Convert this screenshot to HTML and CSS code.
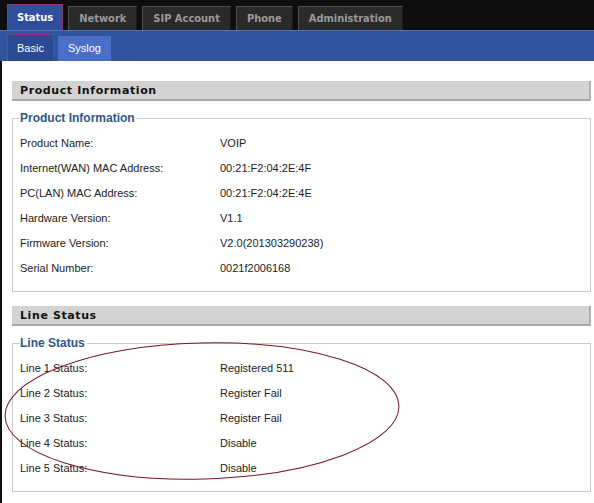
FILE: index.html
```html
<!DOCTYPE html>
<html>
<head>
<meta charset="utf-8">
<link rel="stylesheet" href="styles.css">
</head>
<body>
<div class="page">
  <div class="topbar">
    <div class="tab active">Status</div>
    <div class="tab">Network</div>
    <div class="tab">SIP Account</div>
    <div class="tab">Phone</div>
    <div class="tab">Administration</div>
  </div>
  <div class="subbar">
    <div class="subtab active">Basic</div>
    <div class="subtab">Syslog</div>
  </div>
  <div class="content">
    <div class="section-head">Product Information</div>
    <fieldset class="box">
      <legend>Product Information</legend>
      <div class="row"><span class="label">Product Name:</span><span class="value">VOIP</span></div>
      <div class="row"><span class="label">Internet(WAN) MAC Address:</span><span class="value">00:21:F2:04:2E:4F</span></div>
      <div class="row"><span class="label">PC(LAN) MAC Address:</span><span class="value">00:21:F2:04:2E:4E</span></div>
      <div class="row"><span class="label">Hardware Version:</span><span class="value">V1.1</span></div>
      <div class="row"><span class="label">Firmware Version:</span><span class="value">V2.0(201303290238)</span></div>
      <div class="row"><span class="label">Serial Number:</span><span class="value">0021f2006168</span></div>
    </fieldset>
    <div class="section-head">Line Status</div>
    <fieldset class="box">
      <legend>Line Status</legend>
      <div class="row"><span class="label">Line 1 Status:</span><span class="value">Registered 511</span></div>
      <div class="row"><span class="label">Line 2 Status:</span><span class="value">Register Fail</span></div>
      <div class="row"><span class="label">Line 3 Status:</span><span class="value">Register Fail</span></div>
      <div class="row"><span class="label">Line 4 Status:</span><span class="value">Disable</span></div>
      <div class="row"><span class="label">Line 5 Status:</span><span class="value">Disable</span></div>
    </fieldset>
  </div>
  <svg class="mark" width="594" height="503" viewBox="0 0 594 503">
    <ellipse cx="202" cy="411" rx="197" ry="68" transform="rotate(-1.5 202 411)" fill="none" stroke="#7a1626" stroke-width="1"/>
  </svg>
</div>
</body>
</html>
```
FILE: styles.css
```css
html, body {
  margin: 0;
  padding: 0;
  background: #0e0e0e;
}
.page {
  position: relative;
  width: 594px;
  height: 503px;
  overflow: hidden;
  background: #0e0e0e;
}
.topbar {
  display: flex;
  align-items: flex-end;
  gap: 5px;
  height: 30px;
  padding-left: 7px;
  box-sizing: border-box;
}
.tab {
  font-family: "DejaVu Sans Condensed", "DejaVu Sans", Tahoma, sans-serif;
  font-weight: bold;
  font-size: 11px;
  color: #9a9a9a;
  background: #2a2a2a;
  border-top: 1px solid #4e4e4e;
  border-left: 1px solid #4e4e4e;
  border-right: 1px solid #1a1a1a;
  height: 24px;
  line-height: 24px;
  padding: 0 10px;
  box-sizing: border-box;
}
.tab.active {
  background: #2f4f9c;
  color: #ffffff;
  border: 1px solid #8c3a70;
  border-bottom: none;
  height: 26px;
  line-height: 25px;
  padding: 0 9px;
}
.subbar {
  display: flex;
  align-items: flex-end;
  gap: 4px;
  height: 31px;
  padding-left: 7px;
  background: #32539e;
  border-top: 1px solid #5670b4;
  box-sizing: border-box;
}
.subtab {
  font-family: "Liberation Sans", Arial, sans-serif;
  font-size: 11px;
  color: #ffffff;
  background: #4b6fc6;
  height: 25px;
  line-height: 25px;
  padding: 0 10px;
  box-sizing: border-box;
}
.subtab.active {
  background: #2b4a93;
  border: 1px solid #9c3468;
  border-bottom: none;
  height: 27px;
  line-height: 26px;
  padding: 0 9px;
}
.content {
  background: #ffffff;
  margin-left: 2px;
  padding: 20px 3px 20px 10px;
  height: 442px;
  box-sizing: border-box;
}
.section-head {
  font-family: "DejaVu Sans", Verdana, sans-serif;
  font-weight: bold;
  font-size: 11px;
  letter-spacing: 0.6px;
  color: #111111;
  background: #d3d3d3;
  border-bottom: 2px solid #a8a8a8;
  border-right: 2px solid #b0b0b0;
  height: 20px;
  line-height: 19px;
  padding-left: 8px;
  box-sizing: border-box;
}
.box {
  margin: 10px 0 14px 0;
  border: 1px solid #cccccc;
  padding: 5px 0 11px 7px;
}
.box legend {
  font-family: "Liberation Sans", Arial, sans-serif;
  font-weight: bold;
  font-size: 12px;
  color: #2e5884;
  padding: 0 2px 0 0;
  margin-left: 0;
}
.row {
  display: flex;
  height: 25px;
  align-items: center;
  font-family: "Liberation Sans", Arial, sans-serif;
  font-size: 11px;
  color: #222222;
}
.label {
  width: 200px;
}
.mark {
  position: absolute;
  left: 0;
  top: 0;
  pointer-events: none;
}
```
